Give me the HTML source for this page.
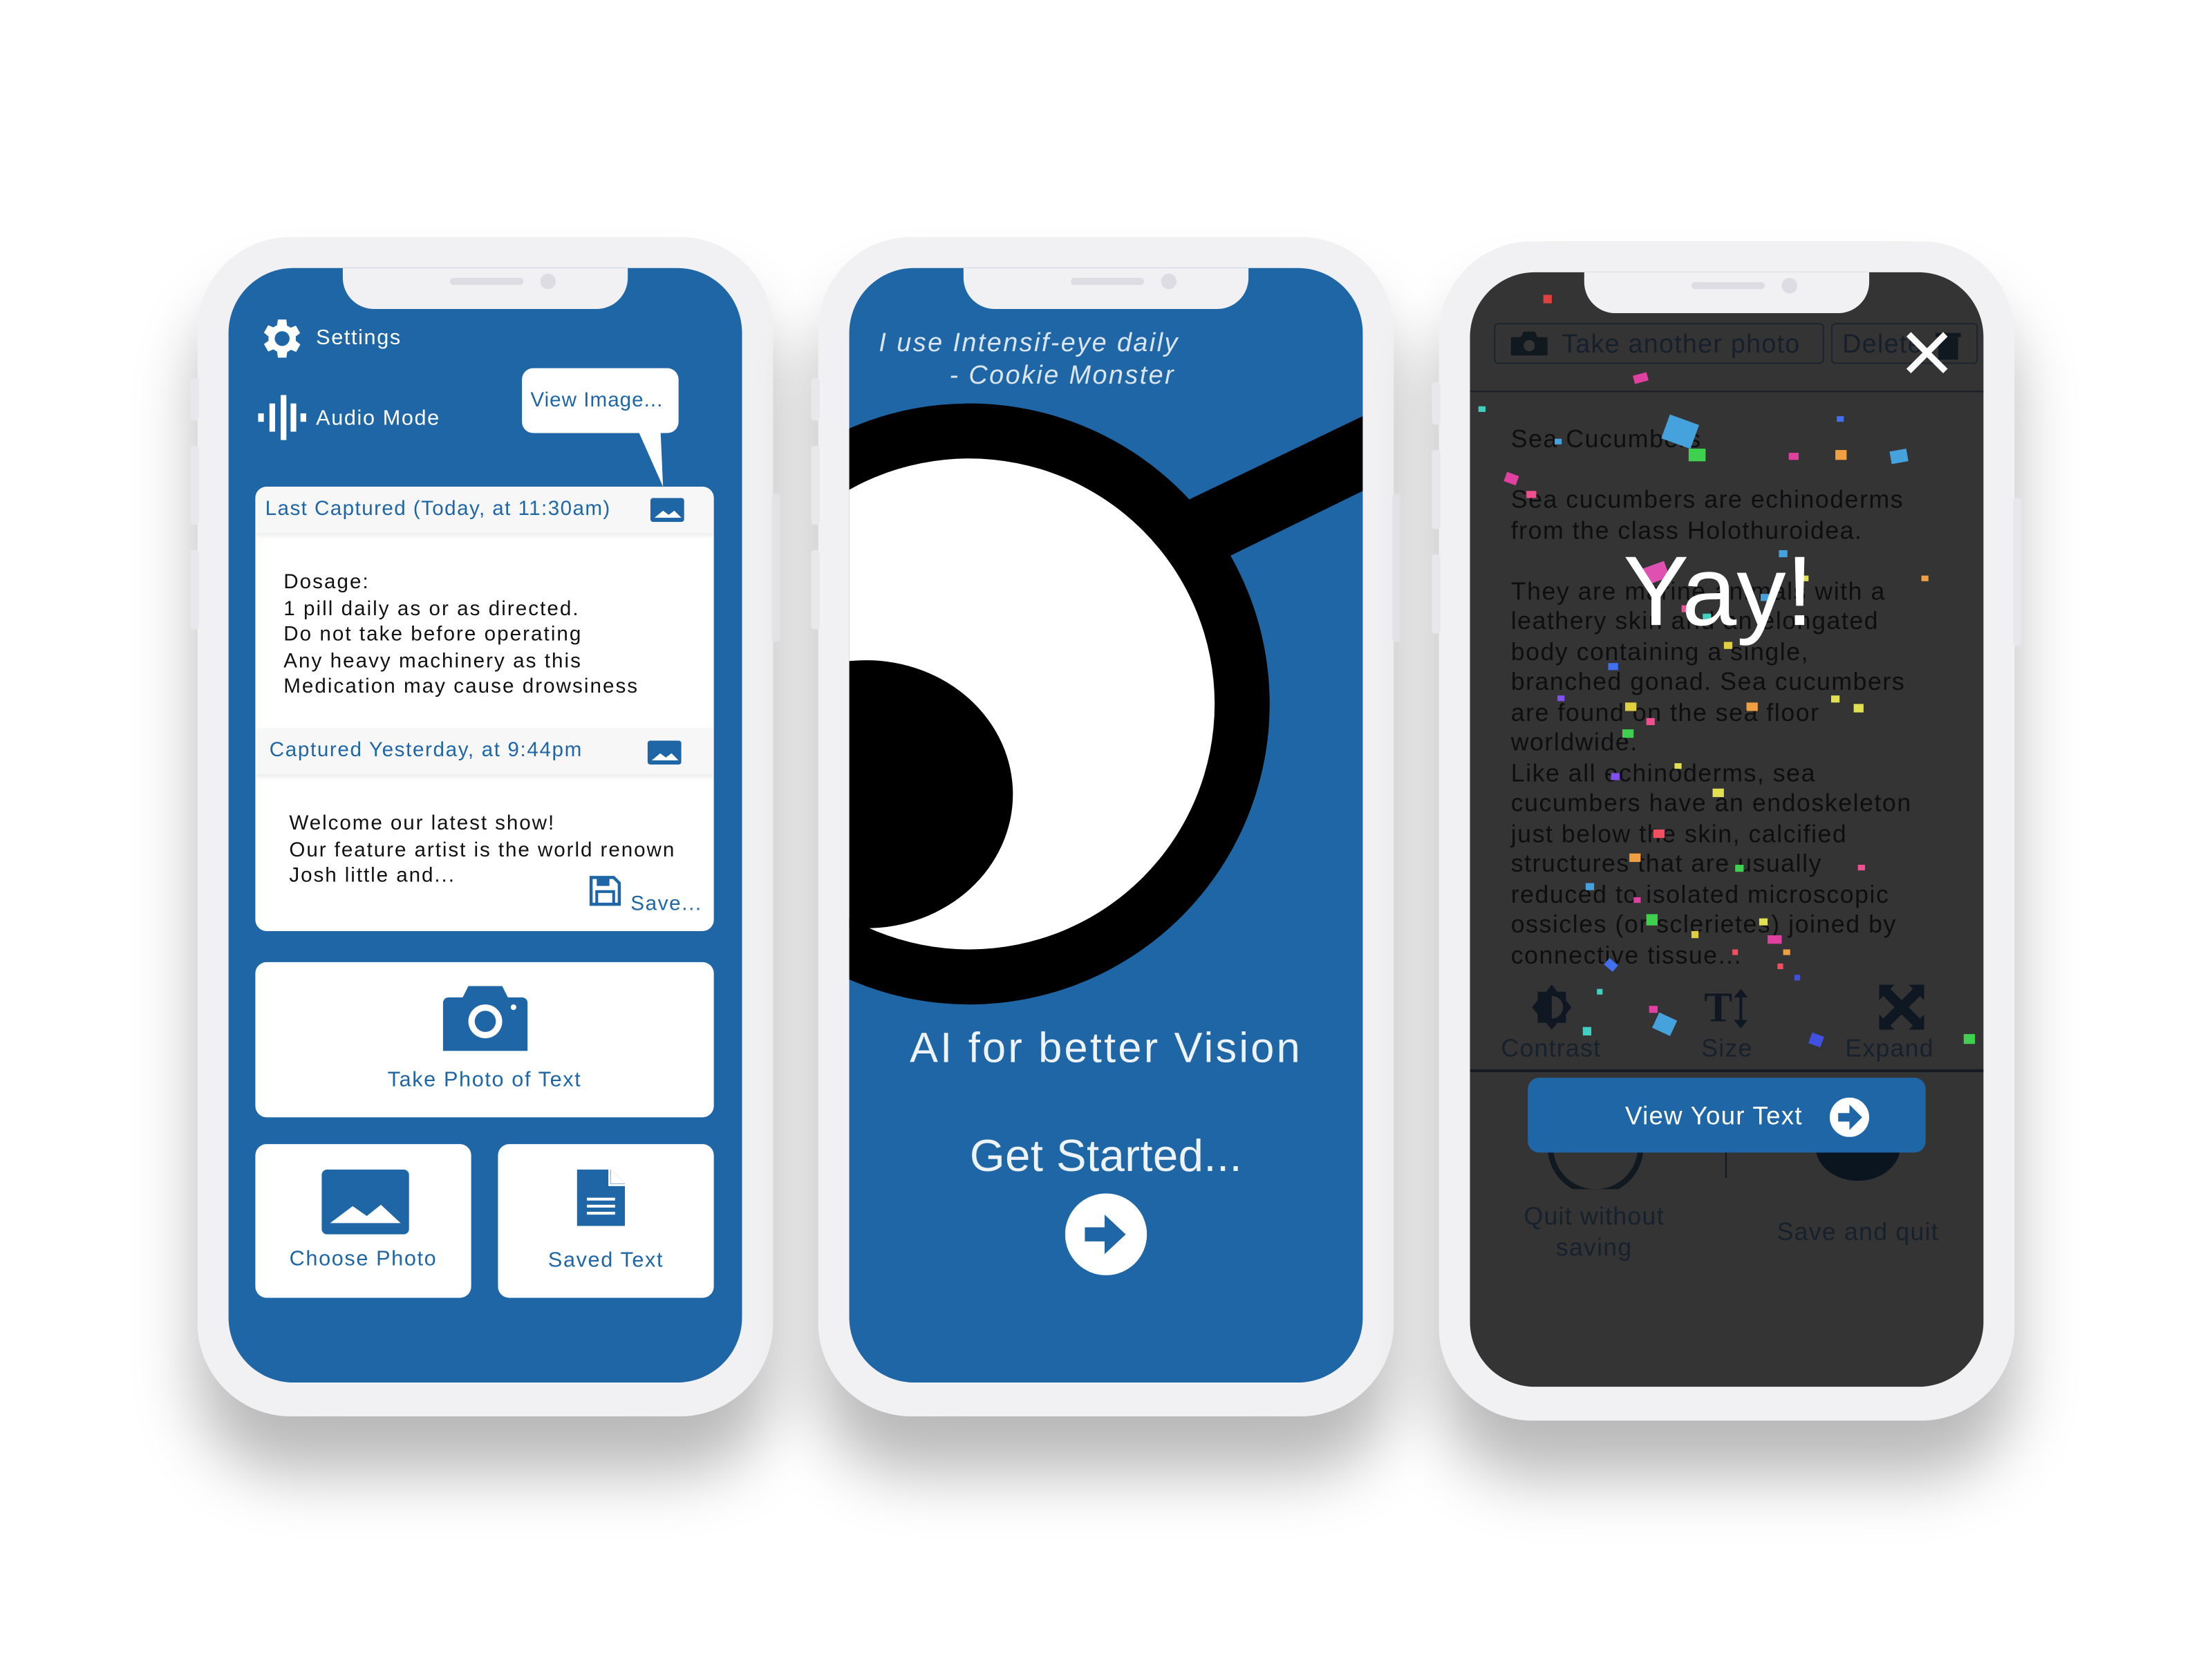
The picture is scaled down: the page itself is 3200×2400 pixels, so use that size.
<!DOCTYPE html>
<html><head><meta charset="utf-8"><style>
*{margin:0;padding:0;box-sizing:border-box}
html,body{width:3200px;height:2400px;background:#fff;overflow:hidden}
#s{position:absolute;left:0;top:0;width:1568px;height:1176px;transform:scale(2.04082);transform-origin:0 0;font-family:"Liberation Sans",sans-serif}
.a{position:absolute}
.frame{position:absolute;width:408px;height:836px;background:#f1f1f3;border-radius:66px;box-shadow:0 40px 45px rgba(0,0,0,.28)}
.scr{position:absolute;left:22px;top:22px;width:364px;height:790px;border-radius:46px;overflow:hidden}
.notch{position:absolute;left:81px;top:0;width:202px;height:29px;background:#f1f1f3;border-radius:0 0 22px 22px}
.notch:before{content:"";position:absolute;left:76px;top:7px;width:52px;height:5px;border-radius:3px;background:#dcdce2}
.notch:after{content:"";position:absolute;left:140px;top:4px;width:11px;height:11px;border-radius:50%;background:#dcdce2}
.sb{position:absolute;background:#e8e8ec;width:6px;border-radius:2px}
.blue{color:#1f66a6}
.card{position:absolute;background:#fff;border-radius:8px}
.t15{font-size:14.5px}
.p1 .a{letter-spacing:.8px}
.p3 .a{letter-spacing:.6px}
</style></head><body><div id="s">

<!-- PHONE 1 -->
<div class="frame p1" style="left:140px;top:168px">
<div class="sb" style="left:-5px;top:100px;height:30px"></div>
<div class="sb" style="left:-5px;top:148px;height:56px"></div>
<div class="sb" style="left:-5px;top:222px;height:56px"></div>
<div class="sb" style="left:407px;top:182px;height:105px"></div>
<div class="scr" style="background:#1f66a6">
 <div class="notch"></div>
 <svg class="a" style="left:20px;top:32px" width="36" height="36" viewBox="0 0 24 24"><path fill="#fff" d="M19.4 13a7.6 7.6 0 000-2l2.1-1.6-2-3.5-2.5 1a7.4 7.4 0 00-1.7-1L15 3h-4l-.4 2.7a7.4 7.4 0 00-1.7 1l-2.5-1-2 3.5L6.6 11a7.6 7.6 0 000 2l-2.2 1.6 2 3.5 2.5-1a7.4 7.4 0 001.7 1L11 21h4l.4-2.7a7.4 7.4 0 001.7-1l2.5 1 2-3.5zM13 15.5a3.5 3.5 0 110-7 3.5 3.5 0 010 7z" transform="translate(-1 0)"/></svg>
 <div class="a" style="left:62px;top:41px;color:#fff;font-size:15px">Settings</div>
 <svg class="a" style="left:20px;top:90px" width="36" height="32"><rect x="1" y="13" width="4" height="6" fill="#fff"/><rect x="9" y="6" width="4" height="20" fill="#fff"/><rect x="17" y="0" width="4" height="32" fill="#fff"/><rect x="24" y="6" width="4" height="20" fill="#fff"/><rect x="31" y="13" width="4" height="6" fill="#fff"/></svg>
 <div class="a" style="left:62px;top:98px;color:#fff;font-size:15px">Audio Mode</div>
 <div class="a" style="left:208px;top:71px;width:111px;height:46px;background:#fff;border-radius:8px"></div>
 <svg class="a" style="left:280px;top:110px" width="40" height="50"><polygon points="8,0 26,0 28,45" fill="#fff"/></svg>
 <div class="a blue" style="left:214px;top:86px;font-size:14.5px;letter-spacing:.5px">View Image...</div>

 <div class="card" style="left:19px;top:155px;width:325px;height:315px;overflow:hidden">
  <div class="a" style="left:0;top:0;width:325px;height:33px;background:#f7f7f8;box-shadow:0 2px 3px rgba(0,0,0,.08)"></div>
  <div class="a blue t15" style="left:7px;top:8px;letter-spacing:.7px">Last Captured (Today, at 11:30am)</div>
  <svg class="a" style="left:280px;top:8px" width="24" height="17"><rect width="24" height="17" rx="2" fill="#1f66a6"/><path d="M3 14l6-5 4 3 4-3 5 5z" fill="#fff"/></svg>
  <div class="a t15" style="left:20px;top:59px;line-height:18.5px;color:#111;letter-spacing:1px">Dosage:<br>1 pill daily as or as directed.<br>Do not take before operating<br>Any heavy machinery as this<br>Medication may cause drowsiness</div>
  <div class="a" style="left:0;top:171px;width:325px;height:33px;background:#f7f7f8;box-shadow:0 2px 3px rgba(0,0,0,.08)"></div>
  <div class="a blue t15" style="left:10px;top:179px;letter-spacing:.8px">Captured Yesterday, at 9:44pm</div>
  <svg class="a" style="left:278px;top:180px" width="24" height="17"><rect width="24" height="17" rx="2" fill="#1f66a6"/><path d="M3 14l6-5 4 3 4-3 5 5z" fill="#fff"/></svg>
  <div class="a t15" style="left:24px;top:230px;line-height:18.5px;color:#111;letter-spacing:.95px">Welcome our latest show!<br>Our feature artist is the world renown<br>Josh little and...</div>
  <svg class="a" style="left:236px;top:275px" width="24" height="23" viewBox="0 0 24 23"><path d="M2 2h16l4 4v15H2z" fill="none" stroke="#1f66a6" stroke-width="2.2"/><rect x="6" y="12" width="12" height="9" fill="none" stroke="#1f66a6" stroke-width="2"/><rect x="6" y="3" width="9" height="5" fill="#1f66a6"/></svg>
  <div class="a blue t15" style="left:266px;top:288px">Save...</div>
 </div>

 <div class="card" style="left:19px;top:492px;width:325px;height:110px">
  <svg class="a" style="left:133px;top:17px" width="60" height="46" viewBox="0 0 60 46"><path d="M0 12a4 4 0 014-4h10l4-8h24l4 8h10a4 4 0 014 4v34H0z" fill="#1f66a6"/><circle cx="30" cy="25" r="12" fill="#fff"/><circle cx="30" cy="25" r="7.5" fill="#1f66a6"/><circle cx="50" cy="15" r="2" fill="#fff"/></svg>
  <div class="a blue" style="left:0;width:325px;text-align:center;top:75px;font-size:15px">Take Photo of Text</div>
 </div>
 <div class="card" style="left:19px;top:621px;width:153px;height:109px">
  <svg class="a" style="left:47px;top:18px" width="62" height="46"><rect width="62" height="46" rx="4" fill="#1f66a6"/><path d="M6 38l16-12 10 7 10-8 14 13z" fill="#fff"/></svg>
  <div class="a blue" style="left:0;width:153px;text-align:center;top:73px;font-size:15px">Choose Photo</div>
 </div>
 <div class="card" style="left:191px;top:621px;width:153px;height:109px">
  <svg class="a" style="left:56px;top:18px" width="34" height="40"><path d="M0 0h24l10 10v30H0z" fill="#1f66a6"/><path d="M24 0v10h10" fill="#fff"/><path d="M23 0v11h11" fill="none" stroke="#fff" stroke-width="1.5"/><rect x="7" y="20" width="20" height="2" fill="#fff"/><rect x="7" y="25" width="20" height="2" fill="#fff"/><rect x="7" y="30" width="20" height="2" fill="#fff"/></svg>
  <div class="a blue" style="left:0;width:153px;text-align:center;top:74px;font-size:15px">Saved Text</div>
 </div>
</div></div>

<!-- PHONE 2 -->
<div class="frame" style="left:580px;top:168px">
<div class="sb" style="left:-5px;top:100px;height:30px"></div>
<div class="sb" style="left:-5px;top:148px;height:56px"></div>
<div class="sb" style="left:-5px;top:222px;height:56px"></div>
<div class="sb" style="left:407px;top:182px;height:105px"></div>
<div class="scr" style="background:#1f66a6">
 <svg class="a" style="left:0;top:0" width="364" height="790">
  <polygon points="241,164 364,105 364,158 270,204" fill="#000"/>
  <circle cx="85" cy="309" r="213" fill="#000"/>
  <circle cx="85" cy="309" r="174" fill="#fff"/>
  <ellipse cx="12" cy="373" rx="104" ry="95" fill="#000"/>
 </svg>
 <div class="notch"></div>
 <div class="a" style="left:21px;top:42px;color:#dbe6f1;font-size:18.5px;font-style:italic;letter-spacing:1.2px">I use Intensif-eye daily</div>
 <div class="a" style="left:71px;top:65px;color:#dbe6f1;font-size:18.5px;font-style:italic;letter-spacing:1.2px">- Cookie Monster</div>
 <div class="a" style="left:0;width:364px;text-align:center;top:537px;color:#eef3f8;font-size:30px;letter-spacing:1.6px">AI for better Vision</div>
 <div class="a" style="left:0;width:364px;text-align:center;top:611px;color:#eef3f8;font-size:32px;letter-spacing:.2px">Get Started...</div>
 <svg class="a" style="left:153px;top:656px" width="58" height="58"><circle cx="29" cy="29" r="29" fill="#fff"/><path d="M14 24h14v-9l15 14-15 14v-9H14z" fill="#1f66a6"/></svg>
</div></div>

<!-- PHONE 3 -->
<div class="frame p3" style="left:1020px;top:171px">
<div class="sb" style="left:-5px;top:100px;height:30px"></div>
<div class="sb" style="left:-5px;top:148px;height:56px"></div>
<div class="sb" style="left:-5px;top:222px;height:56px"></div>
<div class="sb" style="left:407px;top:182px;height:105px"></div>
<div class="scr" style="background:#343434">
 <div class="a" style="left:17px;top:36px;width:234px;height:29px;border:1px solid #1b2530;border-radius:3px"></div>
 <svg class="a" style="left:29px;top:42px" width="26" height="17"><path d="M0 4h7l2-4h8l2 4h7v13H0z" fill="#101820"/><circle cx="13" cy="10" r="4" fill="#343434"/></svg>
 <div class="a" style="left:65px;top:40px;font-size:18.5px;color:#16202b">Take another photo</div>
 <div class="a" style="left:256px;top:36px;width:104px;height:29px;border:1px solid #1b2530;border-radius:3px"></div>
 <div class="a" style="left:264px;top:40px;font-size:18.5px;color:#16202b">Delete</div>
 <svg class="a" style="left:330px;top:42px" width="18" height="20"><rect x="2" y="4" width="14" height="16" fill="#101820"/><rect x="0" y="1" width="18" height="3" fill="#101820"/></svg>
 <div class="a" style="left:0;top:84px;width:364px;height:1px;background:#18202a"></div>
 <div class="a" style="left:29px;top:108px;font-size:17.5px;line-height:21.5px;color:#0e0e10;letter-spacing:.75px">Sea Cucumbers<br><br>Sea cucumbers are echinoderms<br>from the class Holothuroidea.<br><br>They are marine animals with a<br>leathery skin and an elongated<br>body containing a single,<br>branched gonad. Sea cucumbers<br>are found on the sea floor<br>worldwide.<br>Like all echinoderms, sea<br>cucumbers have an endoskeleton<br>just below the skin, calcified<br>structures that are usually<br>reduced to isolated microscopic<br>ossicles (or sclerietes) joined by<br>connective tissue...</div>
 <svg class="a" style="left:44px;top:505px" width="28" height="32"><path d="M14 0l4 5 6 0 0 6 4 5-4 5 0 6-6 0-4 5-4-5-6 0 0-6-4-5 4-5 0-6 6 0z" fill="#0f1822"/><path d="M14 8a8 8 0 010 16z" fill="#343434"/></svg>
 <div class="a" style="left:22px;top:540px;font-size:17.5px;color:#17212c">Contrast</div>
 <div class="a" style="left:166px;top:505px;font-size:30px;font-weight:bold;color:#0f1822;font-family:'Liberation Serif',serif">T</div>
 <svg class="a" style="left:186px;top:508px" width="12" height="28"><path d="M6 0l5 6H7v16h4l-5 6-5-6h4V6H1z" fill="#0f1822"/></svg>
 <div class="a" style="left:164px;top:540px;font-size:17.5px;color:#17212c">Size</div>
 <svg class="a" style="left:290px;top:505px" width="32" height="32"><path d="M0 0h11L8 3l8 8 8-8-3-3h11v11l-3-3-8 8 8 8 3-3v11H21l3-3-8-8-8 8 3 3H0V21l3 3 8-8-8-8-3 3z" fill="#0f1822"/></svg>
 <div class="a" style="left:266px;top:540px;font-size:17.5px;color:#17212c">Expand</div>
 <div class="a" style="left:0;top:565px;width:364px;height:2px;background:#151c24"></div>
 <svg class="a" style="left:49px;top:590px" width="80" height="60"><path d="M8 30a32 32 0 0064 0" fill="none" stroke="#101820" stroke-width="4"/></svg>
 <svg class="a" style="left:235px;top:590px" width="80" height="60"><ellipse cx="40" cy="30" rx="30" ry="24" fill="#0a1520"/></svg>
 <div class="a" style="left:181px;top:620px;width:1px;height:22px;background:#101820"></div>
 <div class="a" style="left:16px;top:658px;width:144px;text-align:center;font-size:17.5px;line-height:22px;color:#17212c">Quit without<br>saving</div>
 <div class="a" style="left:205px;top:670px;width:140px;text-align:center;font-size:17.5px;color:#17212c">Save and quit</div>
 <div class="a" style="left:41px;top:571px;width:282px;height:53px;background:#1f66a6;border-radius:8px"></div>
 <div class="a" style="left:110px;top:588px;font-size:18px;color:#fff">View Your Text</div>
 <svg class="a" style="left:255px;top:585px" width="28" height="28"><circle cx="14" cy="14" r="14" fill="#fff"/><path d="M6 11h8V5l9 9-9 9v-6H6z" fill="#1f66a6"/></svg>
 <svg class="a" style="left:0;top:0" width="364" height="790">
  <g>
  <rect x="52" y="16" width="6" height="6" fill="#e0403f"/><rect x="116" y="72" width="10" height="6" fill="#e040a0" transform="rotate(-15 121 75)"/><rect x="138" y="104" width="22" height="18" fill="#45a2dd" transform="rotate(20 149 113)"/><rect x="155" y="125" width="12" height="9" fill="#40d050"/>
  <rect x="25" y="143" width="9" height="7" fill="#e040a0" transform="rotate(20 30 146)"/><rect x="40" y="155" width="7" height="5" fill="#f05090"/><rect x="259" y="126" width="8" height="7" fill="#f0a040"/><rect x="298" y="126" width="12" height="9" fill="#45a2dd" transform="rotate(-10 304 130)"/>
  <rect x="226" y="128" width="7" height="5" fill="#e040a0"/><rect x="124" y="207" width="16" height="12" fill="#e050b0" transform="rotate(-20 132 213)"/><rect x="219" y="197" width="6" height="5" fill="#45a2dd"/><rect x="98" y="277" width="7" height="5" fill="#4070f0"/>
  <rect x="180" y="262" width="6" height="5" fill="#e0d040"/><rect x="110" y="305" width="8" height="6" fill="#e0d040"/><rect x="196" y="305" width="8" height="6" fill="#f0a040"/><rect x="272" y="306" width="7" height="6" fill="#e0e050"/>
  <rect x="108" y="324" width="8" height="6" fill="#40d050"/><rect x="125" y="316" width="6" height="5" fill="#f05090"/><rect x="145" y="348" width="5" height="4" fill="#e0e050"/><rect x="100" y="355" width="6" height="5" fill="#8050f0"/>
  <rect x="172" y="366" width="8" height="6" fill="#e0e050"/><rect x="113" y="412" width="8" height="6" fill="#f0a040"/><rect x="130" y="395" width="8" height="6" fill="#f05060"/><rect x="188" y="420" width="6" height="5" fill="#40d050"/>
  <rect x="116" y="443" width="5" height="4" fill="#e040a0"/><rect x="82" y="433" width="6" height="5" fill="#45a2dd"/><rect x="125" y="455" width="8" height="8" fill="#40d050"/><rect x="205" y="458" width="6" height="5" fill="#e0e050"/>
  <rect x="211" y="470" width="10" height="6" fill="#e040a0"/><rect x="96" y="488" width="8" height="6" fill="#4070f0" transform="rotate(40 100 491)"/><rect x="222" y="480" width="5" height="4" fill="#f0a040"/><rect x="131" y="527" width="14" height="12" fill="#45a2dd" transform="rotate(25 138 533)"/>
  <rect x="127" y="520" width="6" height="5" fill="#e040a0"/><rect x="80" y="535" width="6" height="6" fill="#40d0c0"/><rect x="350" y="540" width="8" height="7" fill="#40d050"/><rect x="241" y="540" width="9" height="8" fill="#4050e0" transform="rotate(20 245 544)"/>
  <rect x="186" y="480" width="4" height="4" fill="#f05060"/><rect x="218" y="490" width="4" height="4" fill="#f05060"/><rect x="230" y="498" width="4" height="4" fill="#4050e0"/><rect x="157" y="467" width="5" height="5" fill="#e0d040"/>
  <rect x="90" y="508" width="4" height="4" fill="#40d0c0"/><rect x="260" y="102" width="5" height="4" fill="#4070f0"/><rect x="6" y="95" width="5" height="4" fill="#40d0c0"/><rect x="320" y="215" width="5" height="4" fill="#f0a040"/>
  <rect x="62" y="300" width="5" height="4" fill="#8050f0"/><rect x="235" y="215" width="5" height="4" fill="#e0e050"/><rect x="60" y="118" width="5" height="4" fill="#45a2dd"/><rect x="275" y="420" width="5" height="4" fill="#f05090"/>
  <rect x="150" y="236" width="6" height="5" fill="#f05090"/><rect x="165" y="242" width="6" height="5" fill="#40d0c0"/><rect x="206" y="228" width="6" height="5" fill="#45a2dd"/><rect x="256" y="300" width="6" height="5" fill="#e0e050"/>
  </g>
 </svg>
 <div class="a" style="left:-6px;width:364px;text-align:center;top:186px;color:#fff;font-size:70px;line-height:80px;letter-spacing:0">Yay!</div>
 <svg class="a" style="left:308px;top:42px" width="32" height="30"><path d="M3 2l26 26M29 2L3 28" stroke="#fff" stroke-width="4.5"/></svg>
 <div class="notch"></div>
</div></div>

</div></body></html>
